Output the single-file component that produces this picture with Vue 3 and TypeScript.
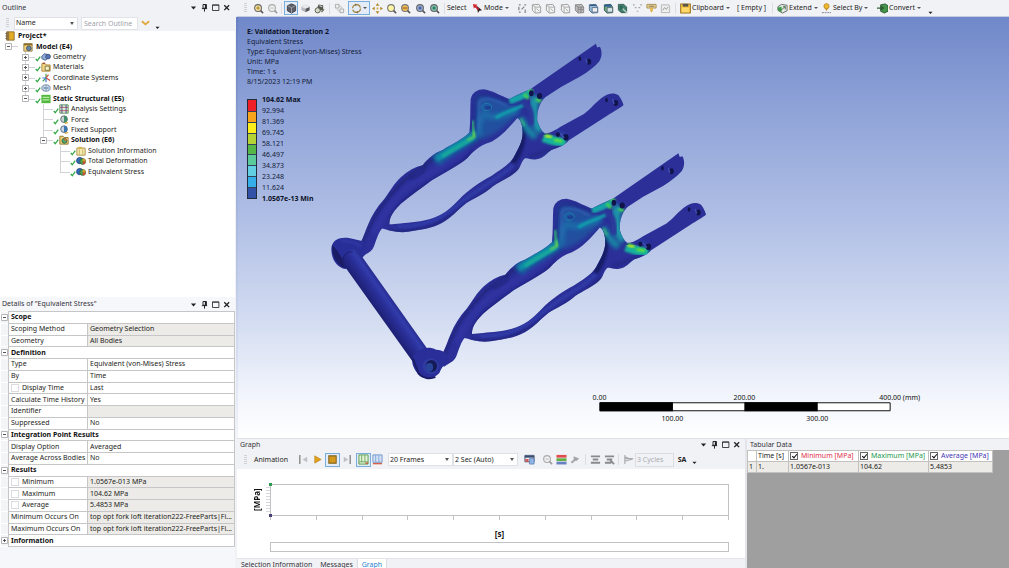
<script setup lang="ts">
import { ref } from 'vue'

interface TreeRow {
  label: string
  icon: string
  level: number
  bold?: boolean
  box?: '+' | '-'
  last?: boolean
  check?: boolean
}
interface DetailRow {
  name: string
  value?: string
  group?: boolean
  closed?: boolean
  shaded?: boolean
  box?: boolean
}

const tree: TreeRow[] = [
  { label: 'Project*', icon: 'project', level: 0, bold: true },
  { label: 'Model (E4)', icon: 'model', level: 1, bold: true, box: '-', last: true },
  { label: 'Geometry', icon: 'geometry', level: 2, box: '+', check: true },
  { label: 'Materials', icon: 'materials', level: 2, box: '+', check: true },
  { label: 'Coordinate Systems', icon: 'axes', level: 2, box: '+', check: true },
  { label: 'Mesh', icon: 'mesh', level: 2, box: '+', check: true },
  { label: 'Static Structural (E5)', icon: 'static', level: 2, bold: true, box: '-', last: true, check: true },
  { label: 'Analysis Settings', icon: 'settings', level: 3, check: true },
  { label: 'Force', icon: 'force', level: 3, check: true },
  { label: 'Fixed Support', icon: 'support', level: 3, check: true },
  { label: 'Solution (E6)', icon: 'solution', level: 3, bold: true, box: '-', last: true, check: true },
  { label: 'Solution Information', icon: 'info', level: 4, check: true },
  { label: 'Total Deformation', icon: 'result', level: 4, check: true },
  { label: 'Equivalent Stress', icon: 'result', level: 4, last: true, check: true },
]

const details: DetailRow[] = [
  { name: 'Scope', group: true },
  { name: 'Scoping Method', value: 'Geometry Selection', shaded: true },
  { name: 'Geometry', value: 'All Bodies', shaded: true },
  { name: 'Definition', group: true },
  { name: 'Type', value: 'Equivalent (von-Mises) Stress' },
  { name: 'By', value: 'Time' },
  { name: 'Display Time', value: 'Last', box: true },
  { name: 'Calculate Time History', value: 'Yes' },
  { name: 'Identifier', value: '', shaded: true },
  { name: 'Suppressed', value: 'No' },
  { name: 'Integration Point Results', group: true },
  { name: 'Display Option', value: 'Averaged' },
  { name: 'Average Across Bodies', value: 'No' },
  { name: 'Results', group: true },
  { name: 'Minimum', value: '1.0567e-013 MPa', shaded: true, box: true },
  { name: 'Maximum', value: '104.62 MPa', shaded: true, box: true },
  { name: 'Average', value: '5.4853 MPa', shaded: true, box: true },
  { name: 'Minimum Occurs On', value: 'top opt fork loft iteration222-FreeParts|Fi...', shaded: true },
  { name: 'Maximum Occurs On', value: 'top opt fork loft iteration222-FreeParts|Fi...', shaded: true },
  { name: 'Information', group: true, closed: true },
]

const legend = ['104.62 Max', '92.994', '81.369', '69.745', '58.121', '46.497', '34.873', '23.248', '11.624', '1.0567e-13 Min']
const bands = ['red', 'orange', 'yellow', 'lime', 'green', 'mint', 'aqua', 'sky', 'navy']
const selectIcons = ['points', 'wire', 'wire', 'wire', 'solid', 'bodyb', 'bodyg', 'bodyt', 'dots', 'label', 'chart']
const selectNames = ['Vertex', 'Edge', 'Face', 'Body', 'Node', 'Element face', 'Element', 'Multi', 'Hit point', 'Label', 'Chart']
const columns = [
  { label: 'Minimum [MPa]', tone: 'min' },
  { label: 'Maximum [MPa]', tone: 'max' },
  { label: 'Average [MPa]', tone: 'avg' },
]
const shown = ref<boolean[]>([true, true, true])
const windowTools = [
  { icon: 'caret', name: 'Menu' },
  { icon: 'pin', name: 'Pin' },
  { icon: 'max', name: 'Maximize' },
  { icon: 'close', name: 'Close' },
]
</script>

<template>
  <svg class="sprite" aria-hidden="true">
    <symbol id="caret" viewBox="0 0 12 12"><path d="M2.5 4.5h7L6 8.5z" fill="#222" /></symbol>
    <symbol id="pin" viewBox="0 0 12 12"><path d="M4 2h4.5v5H4zM2.5 7.5h7M6 7.5v4" fill="none" stroke="#222" stroke-width="1.3" /><path d="M6.5 2h2v5h-2z" fill="#222" /></symbol>
    <symbol id="max" viewBox="0 0 12 12"><path d="M2 2.5h8.500v7.500H2z" fill="none" stroke="#222" stroke-width="1.1" /><path d="M2 3h8.500" stroke="#222" /></symbol>
    <symbol id="close" viewBox="0 0 12 12"><path d="M3 3l6.500 6.500M9.500 3L3 9.500" stroke="#222" stroke-width="1.8" /></symbol>

    <symbol id="tick" viewBox="0 0 8 8"><path d="M1 4.500l2 2.500L7 1.500" fill="none" stroke="#2fa843" stroke-width="1.700" /></symbol>
    <symbol id="project" viewBox="0 0 12 12"><path d="M2 1h9v10H2z" fill="#e5ac25" stroke="#7f6428" /><path d="M2 1h3v10H2z" fill="#927641" /><path d="M.5 3h2M.5 6h2M.5 9h2" stroke="#555" /></symbol>
    <symbol id="model" viewBox="0 0 12 12"><path d="M1 2h10v9H1z" fill="#f4d67b" stroke="#8b7440" /><path d="M1 2h10v2H1z" fill="#8a6a29" /><circle cx="7" cy="7.500" r="2.800" fill="#6d87aa" stroke="#324863" /></symbol>
    <symbol id="geometry" viewBox="0 0 12 12"><path d="M1 5l3-3 4 1v5L5 10 1 8z" fill="#8fa9d5" stroke="#465f8d" /><circle cx="8.500" cy="5.500" r="2.800" fill="#5875b1" stroke="#334b7c" /></symbol>
    <symbol id="materials" viewBox="0 0 12 12"><path d="M1 2h4l1 1.500h5V11H1z" fill="#f3d986" stroke="#a77c2b" /><path d="M5 5h5v5H5z" fill="#faf1c5" stroke="#6c6a38" /><path d="M2 1.500h3" stroke="#9a4a28" stroke-width="1.500" /></symbol>
    <symbol id="axes" viewBox="0 0 12 12"><path d="M6 6V1M6 6L2 10" stroke="#3aa64c" stroke-width="1.400" /><path d="M6 6l5 3M6 6l3-4" stroke="#d64237" stroke-width="1.400" /><path d="M6 6H1.500M6 6v5" stroke="#3e7ad0" stroke-width="1.400" /></symbol>
    <symbol id="mesh" viewBox="0 0 12 12"><ellipse cx="6" cy="6" rx="5" ry="3.800" fill="#d8e5f2" stroke="#617b9a" /><path d="M2 4.500l8 3M2 7.500l8-3M6 2v8" stroke="#7590b0" fill="none" /></symbol>
    <symbol id="static" viewBox="0 0 12 12"><path d="M.5 1h11v10H.5z" fill="#52b83f" /><path d="M2 4h8M2 7h8" stroke="#b9eaa4" stroke-width="1.500" /></symbol>
    <symbol id="settings" viewBox="0 0 12 12"><path d="M1 1h10v10H1z" fill="#e4f1dd" stroke="#4b8b46" /><path d="M3.500 1v10M8.500 1v10" stroke="#5269a3" stroke-width="1.400" /><path d="M1 8h10M1 4h10" stroke="#a54655" /></symbol>
    <symbol id="force" viewBox="0 0 12 12"><circle cx="6" cy="5" r="4" fill="#c9d5d4" stroke="#4d5e5f" /><path d="M6 1a4 4 0 010 8z" fill="#41906c" /><path d="M7 10l4-1" stroke="#e0a52d" stroke-width="1.500" /></symbol>
    <symbol id="support" viewBox="0 0 12 12"><circle cx="6" cy="5" r="4" fill="#c9d7e5" stroke="#4d5e6f" /><path d="M6 1a4 4 0 010 8z" fill="#3e78b2" /><path d="M7 10l4-1" stroke="#e0a52d" stroke-width="1.500" /></symbol>
    <symbol id="solution" viewBox="0 0 12 12"><path d="M1 1.500h4l1 1.500h5v8H1z" fill="#f0d373" stroke="#8c6c2c" /><circle cx="6.500" cy="7" r="3" fill="#52a66c" stroke="#2c6548" /><path d="M6.500 4a3 3 0 013 3h-3z" fill="#cf6737" /></symbol>
    <symbol id="info" viewBox="0 0 12 12"><path d="M1 2.500h10V11H1z" fill="#f7edb0" stroke="#a08338" /><path d="M3 1h4v2H3z" fill="#dfb33e" /><path d="M4 4v6M8 4v6" stroke="#c0aa5c" /></symbol>
    <symbol id="result" viewBox="0 0 12 12"><circle cx="4.500" cy="5.500" r="3.800" fill="#2f6abf" stroke="#244575" /><circle cx="8" cy="6.500" r="3.500" fill="#4ba450" stroke="#326039" /><path d="M8 3a3.500 3.500 0 013.500 3.500H8z" fill="#df9b28" /><path d="M8 6.500h3.500A3.500 3.500 0 018 10z" fill="#cc4f33" /></symbol>

    <symbol id="zoomy" viewBox="0 0 12 12"><circle cx="5.500" cy="5.500" r="3.700" fill="#f8e7a5" stroke="#666" stroke-width="1.200" /><path d="M8.300 8.300l2.700 2.700" stroke="#555" stroke-width="1.700" /><path d="M3.500 5.500h4M5.500 3.500v4" stroke="#a17821" /></symbol>
    <symbol id="zoomg" viewBox="0 0 12 12"><circle cx="5.500" cy="5.500" r="3.700" fill="#eee" stroke="#aaa" stroke-width="1.200" /><path d="M8.300 8.300l2.700 2.700" stroke="#999" stroke-width="1.700" /><path d="M4 5.500h3" stroke="#b5b5b5" /></symbol>
    <symbol id="zoomf" viewBox="0 0 12 12"><circle cx="5.500" cy="5.500" r="3.700" fill="#fff6a5" stroke="#777" stroke-width="1.200" /><path d="M8.300 8.300l2.700 2.700" stroke="#555" stroke-width="1.700" /></symbol>
    <symbol id="zoomo" viewBox="0 0 12 12"><circle cx="5.500" cy="5.500" r="3.700" fill="#f6bd55" stroke="#777" stroke-width="1.200" /><path d="M3 5.500h5" stroke="#7b4b20" /><path d="M8.300 8.300l2.700 2.700" stroke="#555" stroke-width="1.700" /></symbol>
    <symbol id="zoomb" viewBox="0 0 12 12"><circle cx="5.500" cy="5.500" r="3.700" fill="#9db2dd" stroke="#666" stroke-width="1.200" /><path d="M4 4h3v3H4z" fill="#46619a" /><path d="M8.300 8.300l2.700 2.700" stroke="#555" stroke-width="1.700" /></symbol>
    <symbol id="zoomt" viewBox="0 0 12 12"><circle cx="5.500" cy="5.500" r="3.700" fill="#84c4ae" stroke="#666" stroke-width="1.200" /><path d="M4 4h3v3H4z" fill="#317c65" /><path d="M8.300 8.300l2.700 2.700" stroke="#555" stroke-width="1.700" /></symbol>
    <symbol id="cube" viewBox="0 0 12 12"><path d="M6 1l4.500 2v5.500L6 11 1.500 8.500V3z" fill="#5a5d65" stroke="#3c3f46" /><path d="M1.500 3L6 5l4.500-2M6 5v6" fill="none" stroke="#aeb2ba" stroke-width=".8" /></symbol>
    <symbol id="slab" viewBox="0 0 12 12"><path d="M1.500 4L6 6v4L1.500 8z" fill="#b9babf" /><path d="M6 6l4.500-2v4L6 10z" fill="#54565b" /><path d="M1.500 4L6 2l4.500 2L6 6z" fill="#ececef" stroke="#ccc" stroke-width=".5" /></symbol>
    <symbol id="turn" viewBox="0 0 12 12"><path d="M5 1.500l5 1v5l-4 1-3-2z" fill="#555a4f" /><circle cx="4" cy="8" r="2.800" fill="#d8d9c7" stroke="#555a4f" /><path d="M6 3l3 1" stroke="#eee" /><path d="M8 10l3-3" stroke="#6a6a55" stroke-width="1.400" /></symbol>
    <symbol id="sheets" viewBox="0 0 12 12"><path d="M1.500 1.500h4v4h-4zM6.500 6.500h4v4h-4z" fill="#eee" stroke="#aaa" /><path d="M6 2.500l3 3M3 6.500l3 3" stroke="#b5b5b5" /></symbol>
    <symbol id="orbit" viewBox="0 0 12 12"><circle cx="6" cy="6" r="4.300" fill="none" stroke="#a2843e" stroke-width="1.300" stroke-dasharray="5 1.750" /><path d="M4.500.5L7 2 4.500 3.500zM7.500 8.500L5 10l2.500 1.500z" fill="#80652e" /></symbol>
    <symbol id="pan" viewBox="0 0 12 12"><path d="M6 0l2 3H4zM6 12l2-3H4zM0 6l3-2v4zM12 6L9 4v4z" fill="#b48a28" /><path d="M5 5h2v2H5z" fill="#d6ae42" /></symbol>
    <symbol id="arrow" viewBox="0 0 12 12"><path d="M1 1l5 1-4 4z" fill="#d62b31" /><path d="M5 3l6 5-3 .5L6.500 11z" fill="#301a20" /><path d="M3 3l4 4" stroke="#c72a35" stroke-width="2" /></symbol>
    <symbol id="points" viewBox="0 0 12 12"><path d="M2 2h2M8 2h2M2 10h2M8 10h2M2 4v4M8 4L5 7M9 7v2" fill="none" stroke="#888" stroke-width="1.400" /></symbol>
    <symbol id="wire" viewBox="0 0 12 12"><path d="M1.500 2l7-.5 2 3v6l-6 .5-3-3z" fill="#f2f2f2" stroke="#999" /><path d="M1.500 2l3 2.500v6M4.500 4.500h6M6 6l3 3" stroke="#aaa" fill="none" /></symbol>
    <symbol id="solid" viewBox="0 0 12 12"><path d="M1.500 2l7-.5 2 3v6l-6 .5-3-3z" fill="#bbb" stroke="#888" /><path d="M1.500 2l3 2.500v6M4.500 4.500h6M5 7h5M7.500 4.500v6" stroke="#777" fill="none" stroke-width=".8" /></symbol>
    <symbol id="bodyb" viewBox="0 0 12 12"><path d="M1.500 2l7-.5 2 3v6l-6 .5-3-3z" fill="#9bbbd1" stroke="#496c91" /><path d="M4.500 5h6v5h-6z" fill="#eee" stroke="#56708f" /><path d="M2 2.500h7" stroke="#385d89" stroke-width="1.500" /></symbol>
    <symbol id="bodyg" viewBox="0 0 12 12"><path d="M1.500 2l7-.5 2 3v6l-6 .5-3-3z" fill="#74a879" stroke="#31545c" /><path d="M4.500 5h6v5h-6z" fill="#d9e4e7" stroke="#547076" /><path d="M2 3h7" stroke="#2f5fa0" stroke-width="2" /></symbol>
    <symbol id="bodyt" viewBox="0 0 12 12"><path d="M1.500 1.500h6l3 3v6h-6l-3-3z" fill="#43806c" stroke="#315c51" /><path d="M6 6l5 5" stroke="#bad2c6" stroke-width="1.500" /><path d="M3 3h3v4H3z" fill="#2c6459" /></symbol>
    <symbol id="dots" viewBox="0 0 12 12"><path d="M1 2h2M9 2h2M3 5h2M7 5h2M5 9h2" stroke="#aaa" stroke-width="1.300" /></symbol>
    <symbol id="label" viewBox="0 0 12 12"><path d="M1 1.500h10v4H1z" fill="#eedb9c" stroke="#a48a52" /><path d="M3 3.500h6" stroke="#7b6a49" /><path d="M7.500 5.500h-3v3l1.500 2 1.500-2z" fill="#e2b64b" /></symbol>
    <symbol id="chart" viewBox="0 0 12 12"><path d="M1.500 2h8l1 1.500v7h-9z" fill="#eee" stroke="#b3b3b3" /><path d="M3 8l2-3 2 2 2-3" fill="none" stroke="#999" /></symbol>
    <symbol id="clip" viewBox="0 0 12 12"><path d="M.5 1h11v10H.5z" fill="#efbd3b" stroke="#987634" /><path d="M3 1h6v3H3z" fill="#5c564b" /><path d="M2 5h8v5H2z" fill="#ffd968" /></symbol>
    <symbol id="extend" viewBox="0 0 12 12"><path d="M5 1.500l6 1v6L6 11 1 8V4z" fill="#e6e9e4" stroke="#5e665f" /><path d="M1 5l4-1v6L1 8z" fill="#399944" /><path d="M4 8l5-4M6.500 4H9v3" fill="none" stroke="#47704d" /></symbol>
    <symbol id="selectby" viewBox="0 0 12 12"><circle cx="6" cy="3.500" r="2.800" fill="#eeb92f" stroke="#bd8a23" /><path d="M4.500 6L6 9l1.500-3" fill="#c99224" /><path d="M1 10.500h10" stroke="#6e7784" stroke-dasharray="2 1" /></symbol>
    <symbol id="convert" viewBox="0 0 12 12"><path d="M4 2l5-1 3 2v6l-4 2-4-2z" fill="#44944c" stroke="#2a5c31" /><path d="M0 5.500h6M4 3.500l3 2-3 2" fill="none" stroke="#305c35" stroke-width="1.400" /></symbol>

    <symbol id="first" viewBox="0 0 12 12"><path d="M2 1v10" stroke="#777" stroke-width="1.300" /><path d="M10 3v6L5 6z" fill="#bdc0c8" /></symbol>
    <symbol id="play" viewBox="0 0 12 12"><path d="M3 2l7 4-7 4z" fill="#e2a21c" stroke="#b78220" stroke-width=".7" /></symbol>
    <symbol id="stop" viewBox="0 0 12 12"><path d="M2 2h8v8H2z" fill="#dea11d" stroke="#80621f" stroke-width="1.200" /><path d="M4.500 2v8M7.500 2v8" stroke="#b4831f" stroke-width=".7" /></symbol>
    <symbol id="end" viewBox="0 0 12 12"><path d="M10 1v10" stroke="#777" stroke-width="1.300" /><path d="M3 3v6l5-3z" fill="#bdc0c8" /></symbol>
    <symbol id="gridg" viewBox="0 0 12 12"><path d="M1 1h10v10H1z" fill="#e2f2d8" stroke="#589a4b" /><path d="M4 1v8M7.500 1v8M1 8.500h10" stroke="#71aa60" /><path d="M8 10h3" stroke="#c3583e" stroke-width="1.500" /></symbol>
    <symbol id="gridb" viewBox="0 0 12 12"><path d="M1 1h10v8H1z" fill="#d5e2f5" stroke="#6e94cc" /><path d="M4 1v8M7.500 1v8" stroke="#82a6d6" /><path d="M1 10.500h10" stroke="#d6604b" stroke-width="1.500" /></symbol>
    <symbol id="film" viewBox="0 0 12 12"><path d="M1 1.500h10v7H1z" fill="#e9eef7" stroke="#3c4d72" /><path d="M1 3h10" stroke="#3c4d72" stroke-width="2" /><path d="M6 5h5v6H6z" fill="#8fb5e4" stroke="#4f74ad" stroke-width=".7" /><path d="M1.500 5.500h3.500v3H1.500z" fill="#d5554f" /></symbol>
    <symbol id="stack" viewBox="0 0 12 12"><path d="M.5 1h11v3H.5z" fill="#df4e4e" /><path d="M.5 4.700h11v3H.5z" fill="#62af45" /><path d="M.5 8.400h11v3H.5z" fill="#6680c4" /></symbol>
    <symbol id="wrench" viewBox="0 0 12 12"><path d="M1.500 9.500l5-4" stroke="#a5a5a8" stroke-width="2.200" /><path d="M4 2.500l6 2.500-3 2.500-3-1z" fill="#a5a5a8" /></symbol>
    <symbol id="lines" viewBox="0 0 12 12"><path d="M1 2.500h10M1 9.500h10M3 6h6" stroke="#8a8a8e" stroke-width="2" /></symbol>
    <symbol id="linesx" viewBox="0 0 12 12"><path d="M1 2.500h10M1 9.500h7M3 6h6M7 7l4 4" stroke="#8a8a8e" stroke-width="2" /></symbol>
    <symbol id="flag" viewBox="0 0 12 12"><path d="M2 1v10M2 5h9M2 3l7 3-7 2" stroke="#aaa" fill="none" stroke-width="1.200" /></symbol>
  </svg>

  <main class="app">
    <aside class="side">
      <section class="outline">
        <header class="title">
          <h2>Outline</h2><span class="grip-dots"></span>
          <button v-for="t in windowTools" :key="t.icon" :aria-label="t.name"><svg><use :href="'#' + t.icon" /></svg></button>
        </header>
        <div class="search">
          <i class="grip"></i>
          <span class="pick name-pick"><select aria-label="Filter by"><option>Name</option></select></span>
          <input type="text" placeholder="Search Outline" aria-label="Search Outline">
          <button class="expand" aria-label="Expand"><svg viewBox="0 0 10 6"><path d="M1 1l4 3.500L9 1" /></svg></button>
          <button class="more" aria-label="More"><svg><use href="#caret" /></svg></button>
        </div>
        <ul class="tree">
          <li v-for="(row, i) in tree" :key="i" :class="['level' + row.level, { bold: row.bold }]">
            <span v-if="row.level" class="branch" :class="{ last: row.last, root: row.level === 1 }">
              <button v-if="row.box" class="toggle" :aria-label="'Toggle ' + row.label"><svg viewBox="0 0 7 7"><path class="frame" d="M.5.5h6v6h-6z" /><path :d="row.box === '+' ? 'M2 3.500h3M3.500 2v3' : 'M2 3.500h3'" /></svg></button>
            </span>
            <span class="icons">
              <svg v-if="row.check" class="tick"><use href="#tick" /></svg>
              <svg class="node"><use :href="'#' + row.icon" /></svg>
            </span>
            <span>{{ row.label }}</span>
          </li>
        </ul>
      </section>

      <section class="details">
        <header class="title">
          <h2>Details of "Equivalent Stress"</h2><span class="grip-dots"></span>
          <button v-for="t in windowTools" :key="t.icon" :aria-label="t.name"><svg><use :href="'#' + t.icon" /></svg></button>
        </header>
        <table>
          <colgroup><col class="c-gutter"><col class="c-name"><col></colgroup>
          <tbody>
            <tr v-for="row in details" :key="row.name">
              <td class="gutter"><button v-if="row.group" class="toggle" :aria-label="'Toggle ' + row.name"><svg viewBox="0 0 7 7"><path class="frame" d="M.5.5h6v6h-6z" /><path :d="row.closed ? 'M2 3.500h3M3.500 2v3' : 'M2 3.500h3'" /></svg></button></td>
              <th v-if="row.group" colspan="2" class="group">{{ row.name }}</th>
              <template v-else>
                <th class="name"><label v-if="row.box"><input type="checkbox" class="param">{{ row.name }}</label><template v-else>{{ row.name }}</template></th>
                <td class="value" :class="{ shaded: row.shaded }">{{ row.value }}</td>
              </template>
            </tr>
          </tbody>
        </table>
      </section>
    </aside>

    <section class="work">
      <nav class="toolbar" aria-label="Graphics">
        <i class="grip"></i>
        <div class="set two">
          <button aria-label="Zoom in"><svg><use href="#zoomy" /></svg></button>
          <button aria-label="Zoom out"><svg><use href="#zoomg" /></svg></button>
        </div>
        <i class="sep"></i>
        <div class="set three">
          <button class="on" aria-label="Shaded"><svg><use href="#cube" /></svg></button>
          <button aria-label="Section"><svg><use href="#slab" /></svg></button>
          <button aria-label="Rotate view"><svg><use href="#turn" /></svg></button>
        </div>
        <i class="sep"></i>
        <div class="set one"><button aria-label="Copy view"><svg><use href="#sheets" /></svg></button></div>
        <button class="on orbit" aria-label="Orbit"><svg><use href="#orbit" /></svg><i class="drop"></i></button>
        <div class="set five">
          <button aria-label="Pan"><svg><use href="#pan" /></svg></button>
          <button aria-label="Zoom"><svg><use href="#zoomf" /></svg></button>
          <button aria-label="Box zoom"><svg><use href="#zoomo" /></svg></button>
          <button aria-label="Zoom to fit"><svg><use href="#zoomb" /></svg></button>
          <button aria-label="Zoom to selection"><svg><use href="#zoomt" /></svg></button>
        </div>
        <i class="sep"></i>
        <button class="text w-select">Select</button>
        <button class="text w-mode"><svg><use href="#arrow" /></svg>Mode<i class="drop"></i></button>
        <div class="set eleven">
          <button v-for="(s, i) in selectIcons" :key="i" :aria-label="selectNames[i]"><svg><use :href="'#' + s" /></svg></button>
        </div>
        <i class="sep"></i>
        <button class="text w-clip"><svg><use href="#clip" /></svg>Clipboard<i class="drop"></i></button>
        <button class="text w-empty">[ Empty ]</button>
        <i class="sep"></i>
        <button class="text w-extend"><svg><use href="#extend" /></svg>Extend<i class="drop"></i></button>
        <button class="text w-by"><svg><use href="#selectby" /></svg>Select By<i class="drop"></i></button>
        <button class="text w-convert"><svg><use href="#convert" /></svg>Convert<i class="drop"></i></button>
        <button class="more" aria-label="More"><svg><use href="#caret" /></svg></button>
      </nav>

      <div class="viewport">
        <svg class="scene" viewBox="237 17 772 420" role="img" aria-label="Stress plot of a double fork">
          <defs>
            <path id="fork" fill-rule="evenodd" d="M118 640C128 620 134 600 142 582C152 556 168 530 190 506C206 484 222 456 240 440C262 420 284 408 306 404C320 384 342 366 366 358C396 340 426 326 446 306C450 270 448 236 450 206C454 186 470 176 490 176C516 180 540 196 566 205C590 192 610 184 630 175L826 39L830 50L838 48C846 62 844 80 836 92C822 108 804 122 780 137L720 170L674 200C656 216 648 246 650 270C656 288 662 300 672 308C690 308 704 298 720 288L790 250C810 236 828 212 846 200C862 188 880 184 894 194C902 204 906 214 909 223C900 232 880 242 862 254L744 330C736 342 714 352 692 358C680 366 668 384 648 386C632 390 622 380 612 384C600 396 602 408 590 420C570 440 540 452 516 468C490 492 458 504 436 518C408 540 396 558 366 576C336 594 296 598 262 604C226 608 202 598 184 594C172 606 168 626 160 646C154 664 140 668 122 680L100 664ZM206 582C204 560 222 538 240 520C268 496 300 474 332 450C370 426 410 408 440 382C458 362 476 346 506 336C536 324 564 292 590 262C602 268 606 286 606 308C606 334 592 356 578 382C564 404 536 420 512 436C474 456 440 480 416 506C388 536 364 556 326 566C290 576 256 576 230 580Z" />
            <clipPath id="inside"><use href="#fork" clip-rule="evenodd" /></clipPath>
            <filter id="soft3" x="-30%" y="-30%" width="160%" height="160%"><feGaussianBlur stdDeviation="3" /></filter>
            <filter id="soft7" x="-40%" y="-40%" width="180%" height="180%"><feGaussianBlur stdDeviation="7" /></filter>
            <linearGradient id="tube" gradientUnits="userSpaceOnUse" x1="170" y1="842" x2="218" y2="808">
              <stop offset="0" stop-color="#1e2175" /><stop offset=".45" stop-color="#292e97" /><stop offset=".75" stop-color="#323cab" /><stop offset="1" stop-color="#25298a" />
            </linearGradient>
            <g id="arm">
              <use href="#fork" fill="#2b2f97" />
              <g clip-path="url(#inside)" fill="none">
                <path d="M120 650C150 570 180 520 250 450C290 415 330 390 380 358" stroke="#22267c" stroke-width="8" filter="url(#soft3)" />
                <path d="M160 610C175 570 205 520 260 470C320 430 380 400 440 350" stroke="#3036a5" stroke-width="14" filter="url(#soft7)" />
                <path d="M306 404C330 410 296 434 270 446" stroke="#20246f" stroke-width="4" filter="url(#soft3)" />
                <path d="M206 582C204 550 240 515 300 472C370 425 420 405 460 362" stroke="#20247c" stroke-width="6" filter="url(#soft3)" />
                <path d="M200 600C300 608 360 585 430 525C500 480 560 450 596 410" stroke="#22267c" stroke-width="6" filter="url(#soft3)" />
                <path d="M230 588C320 590 370 560 430 508C500 455 560 430 590 388" stroke="#303da8" stroke-width="9" filter="url(#soft3)" />
                <path d="M606 270C612 320 602 360 576 398" stroke="#191c66" stroke-width="18" filter="url(#soft3)" />
                <path d="M466 196C460 250 462 300 480 326C530 316 570 270 604 236C560 220 500 184 466 196Z" fill="#22509f" filter="url(#soft7)" />
                <path d="M474 318C474 290 474 260 492 250C520 270 556 250 590 236" stroke="#1b6ba8" stroke-width="20" filter="url(#soft7)" />
                <path d="M464 312C430 335 388 355 345 390" stroke="#0d8fa8" stroke-width="30" filter="url(#soft7)" />
                <path d="M458 322C430 338 396 356 364 378" stroke="#17a79b" stroke-width="12" filter="url(#soft3)" />
                <path d="M456 270L461 320" stroke="#35bb75" stroke-width="9" filter="url(#soft3)" />
                <path d="M459 304L462 318L440 328" stroke="#7fdc3c" stroke-width="4" filter="url(#soft3)" />
                <path d="M470 330C430 354 390 378 350 400" stroke="#214493" stroke-width="4" filter="url(#soft3)" />
                <path d="M463 296C462 250 460 214 470 198C500 180 540 206 572 214" stroke="#1c2a80" stroke-width="4" filter="url(#soft3)" />
                <path d="M476 296L476 214C500 194 530 212 560 226" stroke="#3466b4" stroke-width="4" filter="url(#soft3)" />
                <path d="M525 262C550 244 580 240 610 222" stroke="#0fa0ac" stroke-width="10" filter="url(#soft3)" />
                <path d="M566 210C590 205 604 198 632 182" stroke="#12a3a7" stroke-width="20" filter="url(#soft3)" />
                <path d="M646 196C632 235 638 270 662 302" stroke="#1a95a8" stroke-width="28" filter="url(#soft7)" />
                <path d="M600 262C612 286 624 304 646 320" stroke="#1587a4" stroke-width="20" filter="url(#soft7)" />
                <path d="M600 264L612 286" stroke="#43bf7d" stroke-width="5" filter="url(#soft3)" />
                <path d="M606 216C628 222 636 244 632 284" stroke="#29379a" stroke-width="16" filter="url(#soft3)" />
                <path d="M610 190L624 204M620 178L636 180M646 206L662 212" stroke="#43d651" stroke-width="9" filter="url(#soft3)" />
                <path d="M668 320C690 328 710 336 736 338" stroke="#16b29c" stroke-width="28" filter="url(#soft3)" />
                <path d="M674 312L694 320M700 328L726 332" stroke="#5ce13c" stroke-width="9" filter="url(#soft3)" />
                <path d="M674 316L692 320" stroke="#cfe32b" stroke-width="6" filter="url(#soft3)" />
                <path d="M628 378C660 370 690 350 730 352" stroke="#252a89" stroke-width="10" filter="url(#soft3)" />
                <path d="M708 300L740 316" stroke="#2b38a0" stroke-width="14" filter="url(#soft3)" />
              </g>
              <ellipse cx="498" cy="229" rx="15" ry="11" fill="#1c5aa3" stroke="#1d8cab" stroke-width="2" />
              <ellipse cx="502" cy="231" rx="9" ry="6" fill="#1e3f92" />
              <g fill="#10144a">
                <ellipse cx="805" cy="93" rx="7" ry="9" /><ellipse cx="778" cy="84" rx="4" ry="7" />
                <ellipse cx="886" cy="217" rx="7" ry="9" /><ellipse cx="858" cy="208" rx="4" ry="7" />
                <ellipse cx="632" cy="188" rx="7" ry="9" /><ellipse cx="657" cy="196" rx="8" ry="9" />
                <ellipse cx="712" cy="312" rx="6" ry="7" /><ellipse cx="736" cy="320" rx="8" ry="10" />
              </g>
              <path d="M719 308l12 14M796 84l4 14M876 206l5 14" stroke="#4250b4" stroke-width="4" />
            </g>
          </defs>
          <g transform="translate(320 30) scale(.33333)">
            <use href="#arm" />
            <path d="M32 664C28 638 44 622 72 622C94 622 108 630 128 632C142 644 140 668 124 682C104 684 92 706 74 716C50 712 34 690 32 664Z" fill="#282e97" />
            <path d="M34 644C32 674 46 704 74 714L64 684C52 664 44 652 34 644Z" fill="#1a1d66" />
            <path d="M60 630C90 630 110 640 122 650" fill="none" stroke="#3038a4" stroke-width="8" filter="url(#soft3)" />
            <path d="M70 706C58 684 70 664 92 658C108 658 118 664 126 682L326 964L276 994Z" fill="url(#tube)" />
            <path d="M68 700C60 680 76 662 96 664" fill="none" stroke="#1b1e6b" stroke-width="3" />
            <use href="#arm" x="248" y="329" />
            <path d="M276 978C294 956 320 944 346 958C370 958 386 974 380 994C366 1006 360 1016 356 1028C340 1046 310 1050 294 1034C280 1018 270 1000 276 978Z" fill="#292e98" />
            <path d="M276 984L294 1030C306 1044 328 1048 344 1040" fill="none" stroke="#1b1e66" stroke-width="6" />
            <ellipse cx="330" cy="1008" rx="25" ry="24" fill="#2f3aa2" />
            <ellipse cx="332" cy="1007" rx="17" ry="18" fill="#151a58" />
            <ellipse cx="326" cy="1011" rx="11" ry="13" fill="#29459a" />
          </g>
          <g class="ruler">
            <path d="M599.500 402.500h290.500v8H599.500z" fill="#fff" stroke="#111" />
            <path d="M599 402h73.500v9H599zM744 402h73.500v9H744z" />
            <text x="599" y="400" text-anchor="middle">0.00</text>
            <text x="744" y="400" text-anchor="middle">200.00</text>
            <text x="879" y="400">400.00 (mm)</text>
            <text x="672" y="421" text-anchor="middle">100.00</text>
            <text x="817" y="421" text-anchor="middle">300.00</text>
          </g>
        </svg>
        <div class="caption">
          <p class="strong">E: Validation Iteration 2</p>
          <p>Equivalent Stress</p>
          <p>Type: Equivalent (von-Mises) Stress</p>
          <p>Unit: MPa</p>
          <p>Time: 1 s</p>
          <p>8/15/2023 12:19 PM</p>
          <div class="legend">
            <div class="bar"><i v-for="b in bands" :key="b" :class="b"></i></div>
            <ul><li v-for="(l, i) in legend" :key="l" :class="{ strong: i === 0 || i === legend.length - 1 }">{{ l }}</li></ul>
          </div>
        </div>
      </div>

      <div class="lower">
        <section class="graph">
          <header class="title thin">
            <h2>Graph</h2><span class="grip-dots"></span>
            <button v-for="t in windowTools" :key="t.icon" :aria-label="t.name"><svg><use :href="'#' + t.icon" /></svg></button>
          </header>
          <div class="anim">
            <i class="grip"></i>
            <span class="anim-name">Animation</span>
            <div class="set four">
              <button aria-label="First frame"><svg><use href="#first" /></svg></button>
              <button aria-label="Play"><svg><use href="#play" /></svg></button>
              <button class="on" aria-label="Stop"><svg><use href="#stop" /></svg></button>
              <button aria-label="Last frame"><svg><use href="#end" /></svg></button>
            </div>
            <div class="set pair">
              <button class="on" aria-label="Distributed"><svg><use href="#gridg" /></svg></button>
              <button aria-label="Result sets"><svg><use href="#gridb" /></svg></button>
            </div>
            <span class="pick"><select aria-label="Frames"><option>20 Frames</option></select></span>
            <span class="pick"><select aria-label="Duration"><option>2 Sec (Auto)</option></select></span>
            <div class="set one film"><button aria-label="Export video"><svg><use href="#film" /></svg></button></div>
            <div class="set three">
              <button aria-label="Zoom"><svg><use href="#zoomg" /></svg></button>
              <button aria-label="Contours"><svg><use href="#stack" /></svg></button>
              <button aria-label="Options"><svg><use href="#wrench" /></svg></button>
            </div>
            <i class="sep"></i>
            <div class="set two">
              <button aria-label="Rows"><svg><use href="#lines" /></svg></button>
              <button aria-label="Clear rows"><svg><use href="#linesx" /></svg></button>
            </div>
            <i class="sep"></i>
            <div class="set one"><button aria-label="Cycle"><svg><use href="#flag" /></svg></button></div>
            <input class="cycles" type="text" value="3 Cycles" aria-label="Cycles" disabled>
            <button class="sa">SA</button>
            <button class="more" aria-label="More"><svg><use href="#caret" /></svg></button>
          </div>
          <div class="plot">
            <span class="y-name">[MPa]</span>
            <div class="frame-box"><i class="top-mark"></i><i class="low-mark"></i></div>
            <div class="ticks"><i v-for="n in 10" :key="n"></i></div>
            <span class="x-name">[s]</span>
            <div class="range"></div>
          </div>
          <nav class="tabs" aria-label="Panels">
            <button>Selection Information</button>
            <button>Messages</button>
            <button class="active">Graph</button>
          </nav>
        </section>

        <section class="tabular">
          <header class="title thin"><h2>Tabular Data</h2><span class="grip-dots"></span></header>
          <table>
            <colgroup><col class="t-num"><col class="t-time"><col class="t-wide"><col class="t-wide"><col class="t-avg"></colgroup>
            <thead>
              <tr>
                <th></th>
                <th>Time [s]</th>
                <th v-for="(c, i) in columns" :key="c.label" :class="c.tone"><label><input v-model="shown[i]" type="checkbox" class="show">{{ c.label }}</label></th>
              </tr>
            </thead>
            <tbody>
              <tr><td>1</td><td>1.</td><td>1.0567e-013</td><td>104.62</td><td>5.4853</td></tr>
            </tbody>
          </table>
        </section>
      </div>
    </section>
  </main>
</template>

<style>
body { margin: 0; overflow: hidden; }
</style>

<style scoped>
* { box-sizing: border-box; }
.sprite { position: absolute; width: 0; height: 0; }
.app {
  display: grid;
  grid-template-columns: 237px 1fr;
  height: 100vh;
  background: #f1f2f6;
  color: #1d1d21;
  font: 7px/10px "Noto Sans", "Open Sans", sans-serif;
}
h2, p, ul { margin: 0; padding: 0; font-size: 7px; font-weight: 400; list-style: none; }
button, input, select { font: inherit; color: inherit; margin: 0; padding: 0; border: 0; background: none; }
button { display: flex; align-items: center; justify-content: center; white-space: nowrap; }
button svg { width: 11px; height: 11px; flex: none; }

.title { display: flex; align-items: center; height: 15px; padding: 0 3px 0 2px; color: #33333a; }
.title.thin { height: 11px; padding-left: 3px; }
.title button { width: 11px; height: 11px; }
.title button svg { width: 9px; height: 9px; }
.grip-dots {
  flex: 1; height: 4px; margin: 0 2px 0 4px;
  background: radial-gradient(circle, #d2d4da 30%, transparent 40%) 0 0 / 2px 2px;
}
.grip { width: 3px; height: 10px; background: repeating-linear-gradient(#cfd1d7 0 1px, transparent 1px 2px); }
.sep { width: 1px; height: 11px; margin: 0 2px; background: #dcdde3; flex: none; }
.more { width: 9px; align-self: flex-end; }
.more svg { width: 7px; height: 7px; }
.drop { border: 2px solid transparent; border-top-color: #555; border-bottom: 0; margin-left: 1px; }

.side { display: grid; grid-template-rows: 297px 1fr; min-width: 0; }
.outline { display: flex; flex-direction: column; background: #fff; margin-right: 2px; min-height: 0; }
.outline .title, .search { background: #f1f2f6; }
.search { display: flex; align-items: center; height: 16px; padding-left: 6px; gap: 3px; }
.pick { position: relative; display: block; width: 64px; height: 13px; background: #fff; border: 1px solid #e0e1e6; }
.pick::after { content: ""; position: absolute; right: 3px; top: 4px; border: 2px solid transparent; border-top: 3px solid #555; border-bottom: 0; }
.pick select { appearance: none; width: 100%; height: 11px; padding-left: 1px; line-height: 10px; display: block; outline: 0; }
.name-pick { margin-left: 2px; }
.search input { width: 57px; height: 13px; padding: 0 2px; background: #fff; border: 1px solid #e2e3e8; }
.search input::placeholder { color: #a0a2aa; opacity: 1; }
.expand svg { width: 9px; height: 6px; }
.expand path { fill: none; stroke: #e0a63a; stroke-width: 2; }

.tree { display: grid; grid-template-rows: repeat(14, 1fr); height: 146px; }
.tree li { display: flex; align-items: center; white-space: nowrap; min-height: 0; }
.level1 { padding-left: 3px; }
.level2 { padding-left: 20px; }
.level3 { padding-left: 38px; }
.level4 { padding-left: 55px; }
.bold { font-weight: 700; color: #111; }
.branch { position: relative; width: 15px; height: 100%; display: flex; align-items: center; }
.branch::before { content: ""; position: absolute; left: 5px; top: 0; bottom: 0; border-left: 1px solid #d3d3d7; }
.branch.last::before { bottom: 50%; }
.branch.root::before { display: none; }
.branch::after { content: ""; position: absolute; left: 5px; right: 0; top: 5px; border-top: 1px solid #d3d3d7; }
.toggle { position: relative; z-index: 1; width: 7px; height: 7px; margin-left: 2px; background: #fff; }
.toggle svg { width: 7px; height: 7px; }
.toggle path { fill: none; stroke: #555; stroke-width: 1; }
.toggle .frame { stroke: #b4b4b9; }
.icons { display: flex; justify-content: flex-end; align-items: center; width: 18px; padding-right: 2px; }
.level1 .icons, .level0 .icons { padding-right: 3px; }
.tick { width: 6px; height: 7px; align-self: flex-end; flex: none; }
.node { width: 10px; height: 10px; flex: none; }

.details { background: #f6f7fa; margin-right: 2px; overflow: hidden; }
.details .title { height: 14px; }
.details table { width: 100%; height: 236px; border-collapse: collapse; table-layout: fixed; background: #fff; border-right: 1px solid #c5c6ca; }
.c-gutter { width: 8px; }
.c-name { width: 79px; }
.details th, .details td { padding: 0 0 0 2px; text-align: left; font-weight: 400; line-height: 10px; border: 1px solid #c6c6c8; white-space: nowrap; overflow: hidden; text-overflow: clip; }
.details .gutter { padding: 0; border-color: transparent #c6c6c8 transparent transparent; background: #f3f4f6; }
.details .gutter .toggle { margin: 0; }
.details .group { font-weight: 700; color: #111; }
.details .shaded { background: #ecebe7; }
.details label { display: flex; align-items: center; gap: 3px; }
.param { appearance: none; width: 8px; height: 8px; border: 1px solid #dcdce0; background: #fff; }

.work { display: grid; grid-template-rows: 17px 1fr 130px; min-width: 0; }
.toolbar, .anim { display: flex; align-items: center; }
.toolbar { padding-left: 7px; border-bottom: 1px solid #c4cbe0; }
.toolbar .grip { margin-right: 4px; }
.set { display: grid; grid-auto-flow: column; grid-auto-columns: 1fr; flex: none; }
.set button { height: 14px; }
.one { width: 14px; }
.two { width: 28px; }
.three { width: 43px; }
.five { width: 72px; }
.eleven { width: 158px; }
.on { outline: 1px solid #78aede; outline-offset: -1px; background: #e4edf7; }
.orbit { width: 22px; height: 14px; margin-left: 2px; }
.text { justify-content: flex-start; gap: 1px; flex: none; }
.w-select { width: 25px; }
.w-mode { width: 43px; }
.w-clip { width: 59px; padding-left: 2px; }
.w-empty { width: 33px; }
.w-extend { width: 46px; padding-left: 2px; }
.w-by { width: 56px; }
.w-convert { width: 49px; }

.viewport {
  position: relative; min-height: 0; margin-left: -1px;
  border: solid; border-width: 0 0 0 2px;
  border-image: linear-gradient(#6780c2, #f2f5fc) 1;
  background: linear-gradient(#7088c9 0%, #8fa3d8 22%, #b0bfe5 48%, #d3dcf1 72%, #f2f5fc 90%, #fff 100%);
}
.scene { position: absolute; inset: 0; width: 100%; height: 100%; }
.ruler text { font-size: 7px; fill: #111; }
.caption { position: relative; padding: 10px 0 0 9px; color: #141c38; }
.strong { font-weight: 700; color: #0c1228; }
.legend { display: flex; gap: 5px; margin-top: 7px; }
.legend li { line-height: 11px; }
.bar { width: 10px; height: 100px; margin-top: 5px; display: grid; grid-template-rows: repeat(9, 1fr); border: 1px solid #222c3c; }
.bar i + i { border-top: 1px solid #33435a; }
.red { background: #ee1f26; }
.orange { background: #f9a51b; }
.yellow { background: #fcee1d; }
.lime { background: #b5d334; }
.green { background: #55b748; }
.mint { background: #5bcb9c; }
.aqua { background: #63cfe3; }
.sky { background: #36aee8; }
.navy { background: #3451a8; }

.lower { display: grid; grid-template-columns: 510px 1fr; background: #f1f2f6; }
.graph { display: grid; grid-template-rows: 11px 19px 1fr 9px; min-width: 0; overflow: hidden; border-right: 2px solid #e4e5ea; }
.graph, .tabular { border-top: 1px solid #dfe0e5; }
.anim { padding-left: 7px; background: #f1f2f6; }
.anim-name { width: 42px; margin-left: 7px; }
.four { width: 58px; }
.pair { width: 29px; margin: 0 3px 0 2px; }
.anim .pick { width: 65px; }
.film { margin: 0 4px; }
.cycles { width: 39px; height: 14px; padding: 0 2px; border: 1px solid #dcdde2; color: #a9abb2; }
.anim .cycles { padding: 0 1px; }
.sa { width: 16px; font-weight: 700; }
.anim .more { padding-bottom: 3px; }
.plot {
  display: grid; background: #fff; padding: 15px 16px 0 11px;
  grid-template-columns: 22px 1fr; grid-template-rows: 32px 4px 22px 10px;
  border-bottom: 1px solid #e3e4e8;
}
.y-name { writing-mode: vertical-rl; transform: rotate(180deg); text-align: center; font-weight: 700; color: #111; justify-self: start; font-size: 8px; margin-left: 4px; }
.frame-box { position: relative; border: 1px solid #c2c2c4; }
.frame-box::before { content: ""; position: absolute; left: -5px; top: 2px; bottom: 2px; width: 4px; background: repeating-linear-gradient(#d8d8dc 0 1px, transparent 1px 3px); }
.top-mark, .low-mark { position: absolute; left: -2px; width: 3px; height: 3px; }
.top-mark { top: -2px; background: #2c9b52; }
.low-mark { bottom: -2px; background: #4a3f73; }
.ticks { grid-column: 2; display: grid; grid-template-columns: repeat(10, 1fr); border-right: 1px solid #c2c2c4; }
.ticks i { border-left: 1px solid #c2c2c4; }
.x-name { grid-column: 2; justify-self: center; align-self: center; font-weight: 700; color: #111; margin-top: 6px; font-size: 8px; }
.range { grid-column: 2; border: 1px solid #c2c2c4; }
.tabs { display: flex; align-items: flex-start; overflow: hidden; }
.tabs button { height: 10px; padding: 1px 4px 0; color: #33333a; }
.tabs .active { background: #fff; color: #1e7fd0; border-right: 1px solid #dcdde2; border-left: 1px solid #dcdde2; }

.tabular { background: #9f9f9f; min-width: 0; }
.tabular .title { background: #f1f2f6; }
.tabular table { border-collapse: collapse; table-layout: fixed; width: 246px; background: #fff; }
.t-num { width: 9px; }
.t-time { width: 32px; }
.t-wide { width: 70px; }
.tabular th, .tabular td { height: 11px; padding: 0 0 0 1px; font-weight: 400; text-align: left; white-space: nowrap; line-height: 10px; border: 1px solid #c3c1bd; overflow: hidden; }
.tabular tbody { background: #ecebe7; }
.tabular label { display: flex; align-items: center; gap: 3px; }
.min { color: #e0314b; }
.max { color: #23984a; }
.avg { color: #4435b5; }
.show { appearance: none; position: relative; width: 8px; height: 8px; border: 1px solid #666; background: #fff; flex: none; }
.show:checked::after { content: ""; position: absolute; left: 2px; top: 0; width: 2px; height: 4px; border: solid #111; border-width: 0 1px 1px 0; transform: rotate(40deg); }
</style>
